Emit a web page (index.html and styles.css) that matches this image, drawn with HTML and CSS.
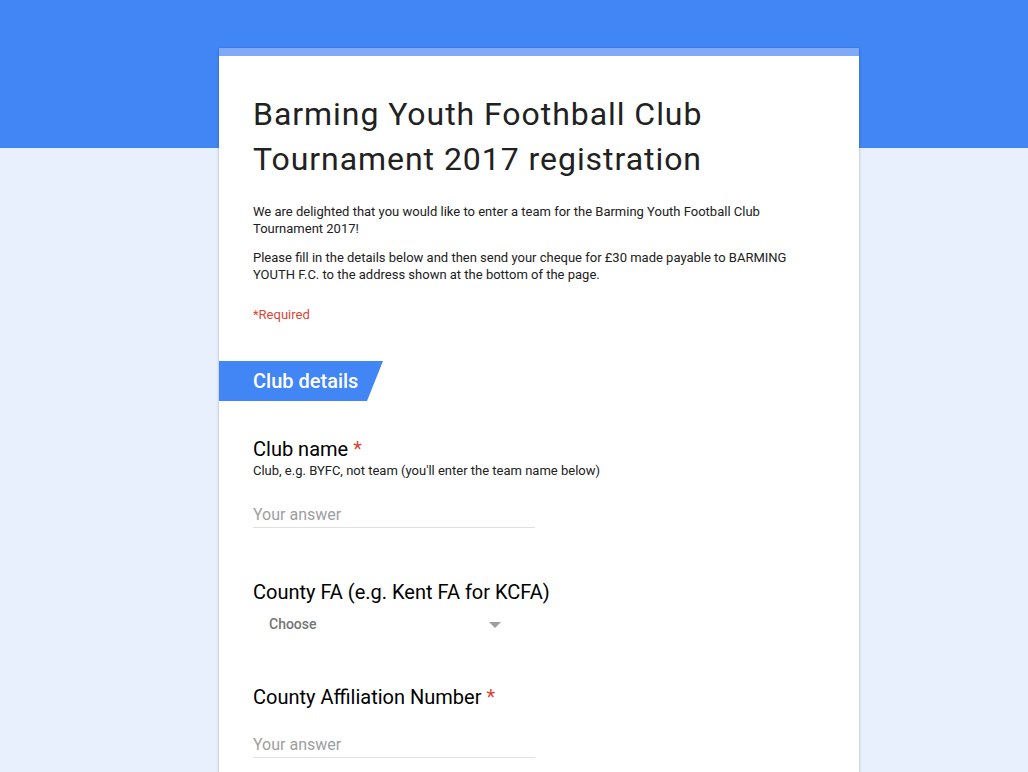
FILE: index.html
```html
<!DOCTYPE html>
<html lang="en">
<head>
<meta charset="utf-8">
<title>Barming Youth Foothball Club Tournament 2017 registration</title>
<link rel="stylesheet" href="styles.css">
</head>
<body>
<div class="page">
  <div class="card">
    <div class="stripe"></div>
    <div class="intro">
      <h1 class="title">Barming Youth Foothball Club Tournament 2017 registration</h1>
      <div class="desc">
        <p>We are delighted that you would like to enter a team for the Barming Youth Football Club Tournament 2017!</p>
        <p>Please fill in the details below and then send your cheque for £30 made payable to BARMING YOUTH F.C. to the address shown at the bottom of the page.</p>
      </div>
      <div class="required-note">*Required</div>
    </div>
    <div class="section-head"><span class="section-title">Club details</span></div>

    <div class="question q-first">
      <div class="q-label">Club name <span class="star">*</span></div>
      <div class="q-help">Club, e.g. BYFC, not team (you'll enter the team name below)</div>
      <div class="answer"><span class="placeholder">Your answer</span></div>
    </div>

    <div class="question q-second">
      <div class="q-label">County FA (e.g. Kent FA for KCFA)</div>
      <div class="dropdown"><span class="choose">Choose</span><span class="arrow"></span></div>
    </div>

    <div class="question q-third">
      <div class="q-label">County Affiliation Number <span class="star">*</span></div>
      <div class="answer"><span class="placeholder">Your answer</span></div>
    </div>
  </div>
</div>
</body>
</html>
```

FILE: styles.css
```css
html, body {
  margin: 0;
  padding: 0;
}
body {
  font-family: Roboto, "Liberation Sans", Arial, sans-serif;
  color: #212121;
  background: #e8effd;
}
.page {
  min-height: 772px;
  background: linear-gradient(#4285f4 0, #4285f4 148px, #e8effd 148px);
  padding-top: 48px;
  overflow: hidden;
}
.card {
  width: 640px;
  margin-left: 219px;
  background: #fff;
  min-height: 760px;
  box-shadow: 0 1px 3px rgba(0,0,0,0.22), 0 0 1px rgba(0,0,0,0.12);
}
.stripe {
  height: 8px;
  background: #80aaf8;
}
.intro {
  padding: 36px 34px 0 34px;
}
.title {
  margin: 0;
  font-size: 32px;
  font-weight: 400;
  line-height: 45px;
  letter-spacing: 0.95px;
  color: #212121;
  width: 500px;
}
.desc {
  margin-top: 21px;
  font-size: 13px;
  line-height: 17px;
  color: #212121;
}
.desc p {
  margin: 0 0 12px 0;
}
.desc p:last-child {
  margin-bottom: 0;
}
.required-note {
  margin-top: 23px;
  font-size: 13px;
  line-height: 17px;
  color: #db4437;
}
.section-head {
  margin-top: 38px;
  height: 40px;
  width: 164px;
  background: #4285f4;
  clip-path: polygon(0 0, 100% 0, 148px 100%, 0 100%);
  display: flex;
  align-items: center;
  padding-left: 34px;
  box-sizing: border-box;
}
.section-title {
  color: #fff;
  font-size: 20px;
  font-weight: 500;
  line-height: 24px;
}
.question {
  padding: 0 34px;
}
.q-first { margin-top: 36px; }
.q-second { margin-top: 52px; }
.q-third { margin-top: 49px; }
.q-label {
  font-size: 20px;
  line-height: 24px;
  color: #000;
}
.star {
  color: #db4437;
}
.q-help {
  margin-top: 1px;
  font-size: 13px;
  line-height: 17px;
  color: #212121;
}
.answer {
  margin-top: 24px;
  width: 282px;
  border-bottom: 1px solid #e0e0e0;
  height: 24px;
}
.placeholder {
  font-size: 16px;
  line-height: 24px;
  color: #9e9e9e;
}
.dropdown {
  margin-top: 8px;
  width: 232px;
  height: 24px;
  padding-left: 16px;
  display: flex;
  align-items: center;
  justify-content: space-between;
}
.choose {
  font-size: 14px;
  font-weight: 500;
  color: #757575;
}
.arrow {
  width: 0;
  height: 0;
  margin-top: 1px;
  border-left: 6px solid transparent;
  border-right: 6px solid transparent;
  border-top: 6px solid #9e9e9e;
}
```
